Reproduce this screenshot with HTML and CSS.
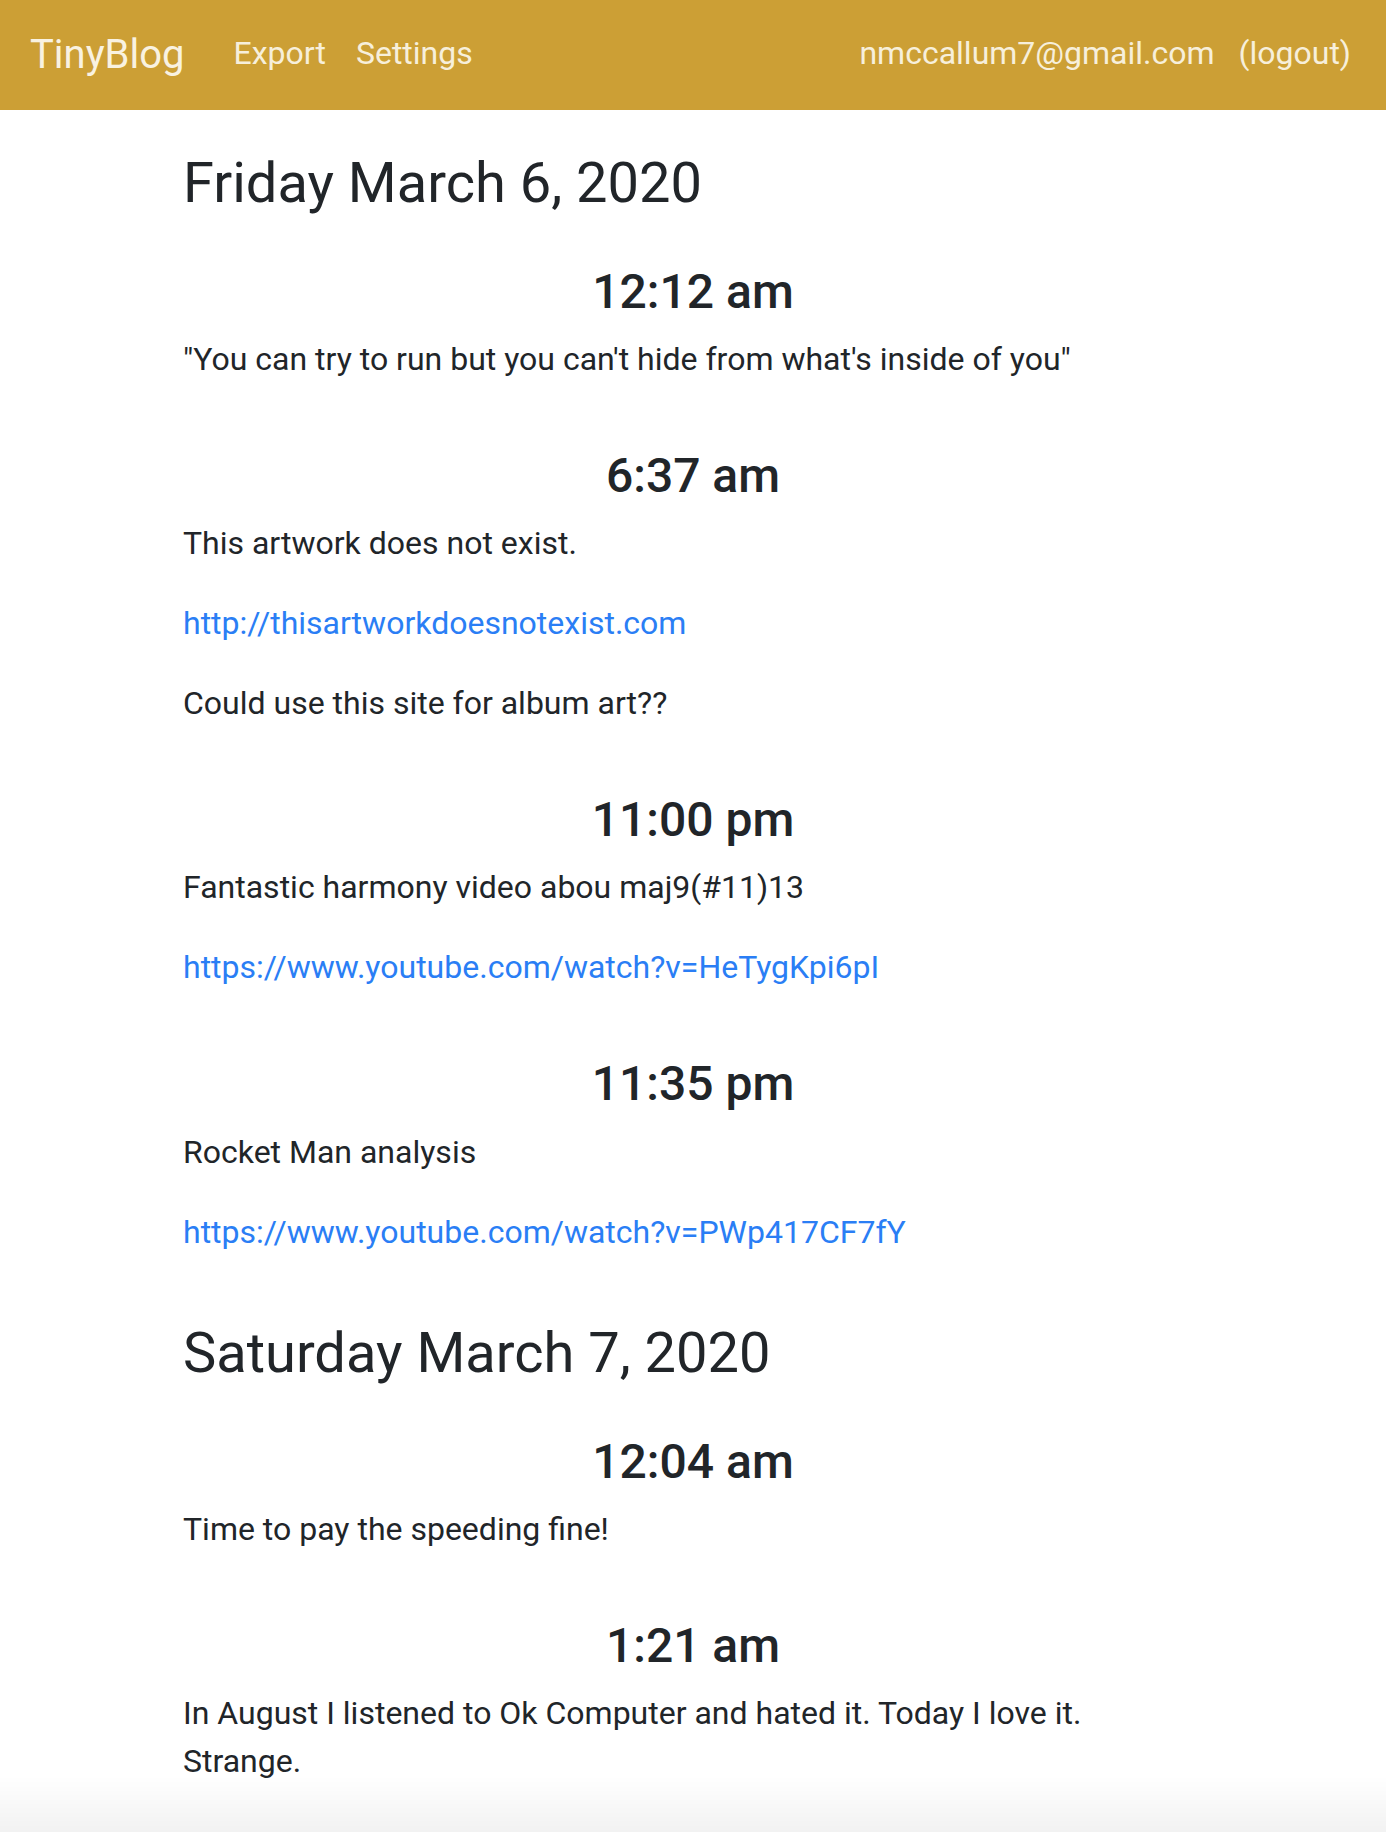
FILE: index.html
```html
<!DOCTYPE html>
<html lang="en">
<head>
<meta charset="utf-8">
<title>TinyBlog</title>
<link rel="stylesheet" href="styles.css">
</head>
<body>
<nav class="navbar">
  <div class="nav-left">
    <a class="brand" href="#">TinyBlog</a>
    <a class="nav-link" href="#">Export</a>
    <a class="nav-link" href="#">Settings</a>
  </div>
  <div class="nav-right">
    <span class="nav-text">nmccallum7@gmail.com</span>
    <a class="nav-text" href="#">(logout)</a>
  </div>
</nav>
<main class="container">
  <section class="day">
    <h3 class="date">Friday March 6, 2020</h3>
    <article class="post">
      <h4 class="time">12:12 am</h4>
      <p>"You can try to run but you can't hide from what's inside of you"</p>
    </article>
    <article class="post">
      <h4 class="time">6:37 am</h4>
      <p>This artwork does not exist.</p>
      <p><a href="#">http://thisartworkdoesnotexist.com</a></p>
      <p>Could use this site for album art??</p>
    </article>
    <article class="post">
      <h4 class="time">11:00 pm</h4>
      <p>Fantastic harmony video abou maj9(#11)13</p>
      <p><a href="#">https://www.youtube.com/watch?v=HeTygKpi6pI</a></p>
    </article>
    <article class="post">
      <h4 class="time">11:35 pm</h4>
      <p>Rocket Man analysis</p>
      <p><a href="#">https://www.youtube.com/watch?v=PWp417CF7fY</a></p>
    </article>
  </section>
  <section class="day">
    <h3 class="date">Saturday March 7, 2020</h3>
    <article class="post">
      <h4 class="time">12:04 am</h4>
      <p>Time to pay the speeding fine!</p>
    </article>
    <article class="post">
      <h4 class="time">1:21 am</h4>
      <p>In August I listened to Ok Computer and hated it. Today I love it. Strange.</p>
    </article>
  </section>
</main>
<div class="bottom-fade"></div>
</body>
</html>
```
FILE: styles.css
```css
* {
  box-sizing: border-box;
}

html, body {
  margin: 0;
  padding: 0;
}

body {
  font-family: Roboto, "Liberation Sans", Arial, sans-serif;
  font-size: 32px;
  line-height: 1.5;
  color: #212529;
  background: #ffffff;
}

a {
  text-decoration: none;
}

.navbar {
  height: 110px;
  background: #cc9f35;
  display: flex;
  align-items: center;
  justify-content: space-between;
  padding: 0 35px 0 30px;
}

.nav-left,
.nav-right {
  display: flex;
  align-items: center;
}

.brand {
  font-size: 40px;
  line-height: 1.5;
  color: #f9f2e1;
  margin-right: 49px;
}

.nav-link {
  color: #f7efdb;
  font-size: 32px;
  margin-right: 30px;
  padding-bottom: 4px;
}

.nav-right {
  gap: 24px;
}

.nav-text {
  color: #f7efdb;
  font-size: 32px;
  padding-bottom: 4px;
}

.container {
  max-width: 1080px;
  margin: 0 auto;
  padding: 8px 30px 0;
}

.day {
  padding-top: 32px;
}

.date {
  font-size: 56px;
  font-weight: 400;
  line-height: 1.2;
  margin: 0 0 14px;
}

.post {
  padding-top: 32px;
}

.time {
  font-size: 48px;
  font-weight: 500;
  line-height: 1.2;
  margin: 0 0 14.5px;
  text-align: center;
}

.post p {
  margin: 0 0 32px;
}

.post p a {
  color: #2a7ef5;
}

.bottom-fade {
  position: fixed;
  left: 0;
  right: 0;
  bottom: 0;
  height: 56px;
  background: linear-gradient(to bottom, rgba(0, 0, 0, 0), rgba(0, 0, 0, 0.05));
  pointer-events: none;
}
```
